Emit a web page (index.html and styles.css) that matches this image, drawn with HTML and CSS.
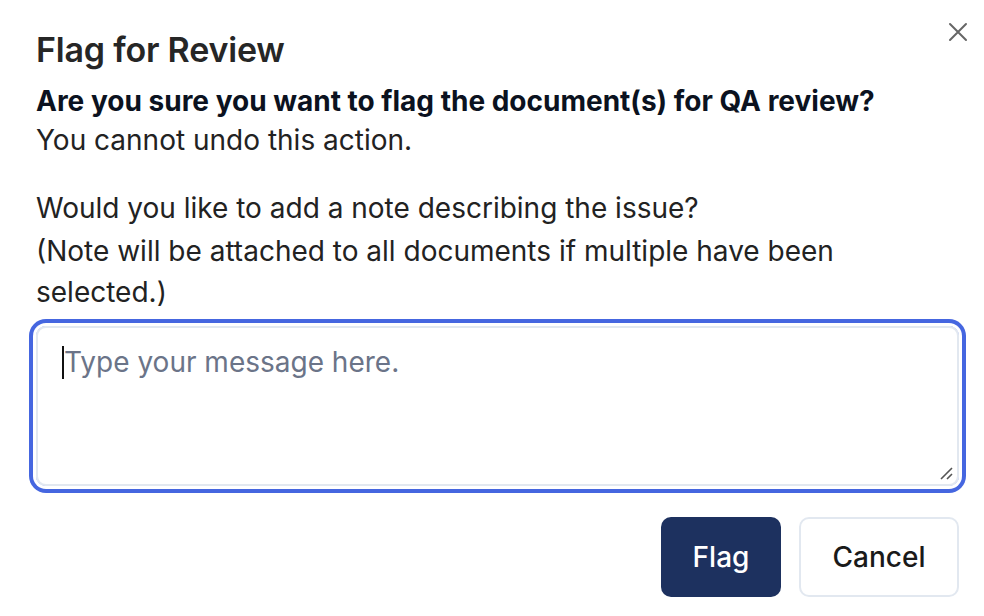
FILE: index.html
```html
<!DOCTYPE html>
<html>
<head>
<meta charset="utf-8">
<link rel="stylesheet" href="styles.css">
</head>
<body>
<div class="dialog">
  <button class="close" aria-label="Close">
    <svg width="20" height="20" viewBox="0 0 20 20"><path d="M2 2 L18 18 M18 2 L2 18" stroke="#666" stroke-width="2" stroke-linecap="round" fill="none"/></svg>
  </button>
  <h2 class="title">Flag for Review</h2>
  <p class="question">Are you sure you want to flag the document(s) for QA review?</p>
  <p class="text">You cannot undo this action.</p>
  <p class="text prompt">Would you like to add a note describing the issue?</p>
  <p class="text note">(Note will be attached to all documents if multiple have been selected.)</p>
  <div class="field">
    <span class="caret"></span>
    <span class="placeholder">Type your message here.</span>
    <svg class="grip" width="14" height="14" viewBox="0 0 14 14"><path d="M2 13 L13 2 M8 13 L13 8" stroke="#555" stroke-width="1.6" fill="none"/></svg>
  </div>
  <div class="actions">
    <button class="btn primary">Flag</button>
    <button class="btn secondary">Cancel</button>
  </div>
</div>
</body>
</html>
```

FILE: styles.css
```css
* { box-sizing: border-box; }
html, body { margin: 0; padding: 0; background: #fff; }
body { font-family: Inter, "Noto Sans", sans-serif; color: #222; }
.dialog {
  position: relative;
  width: 984px;
  height: 616px;
  padding: 30px 25px 0 36px;
}
.close {
  position: absolute;
  top: 22px;
  right: 16px;
  border: 0;
  background: none;
  padding: 0;
  width: 20px;
  height: 20px;
}
.title {
  margin: 0;
  font-size: 34px;
  font-weight: 600;
  line-height: 40px;
  color: #262626;
  letter-spacing: -0.2px;
}
.question {
  margin: 12px 0 0;
  font-size: 28px;
  font-weight: 700;
  line-height: 38px;
  color: #0b1220;
}
.text {
  margin: 0;
  font-size: 28px;
  line-height: 40px;
  color: #222;
}
.prompt { margin-top: 28px; }
.note { line-height: 41px; margin-top: 3px; }
.field {
  position: relative;
  margin-top: 13px;
  height: 160px;
  border: 2px solid #e2e8f0;
  border-radius: 10px;
  box-shadow: 0 0 0 3px #fff, 0 0 0 7px #4566e0;
  padding: 18px 24px;
  display: flex;
  align-items: flex-start;
}
.caret {
  width: 2px;
  height: 33px;
  background: #111;
}
.placeholder {
  font-size: 28px;
  line-height: 33px;
  color: #6b7488;
}
.grip {
  position: absolute;
  right: 4px;
  bottom: 4px;
}
.actions {
  display: flex;
  justify-content: flex-end;
  gap: 18px;
  margin-top: 31px;
}
.btn {
  height: 80px;
  border-radius: 10px;
  font-family: Inter, "Noto Sans", sans-serif;
  font-size: 28px;
  font-weight: 500;
  padding: 0;
}
.primary {
  width: 120px;
  background: #1d315f;
  color: #fff;
  border: 0;
}
.secondary {
  width: 160px;
  background: #fff;
  color: #1a1a1a;
  border: 2px solid #e2e8f0;
}
```
